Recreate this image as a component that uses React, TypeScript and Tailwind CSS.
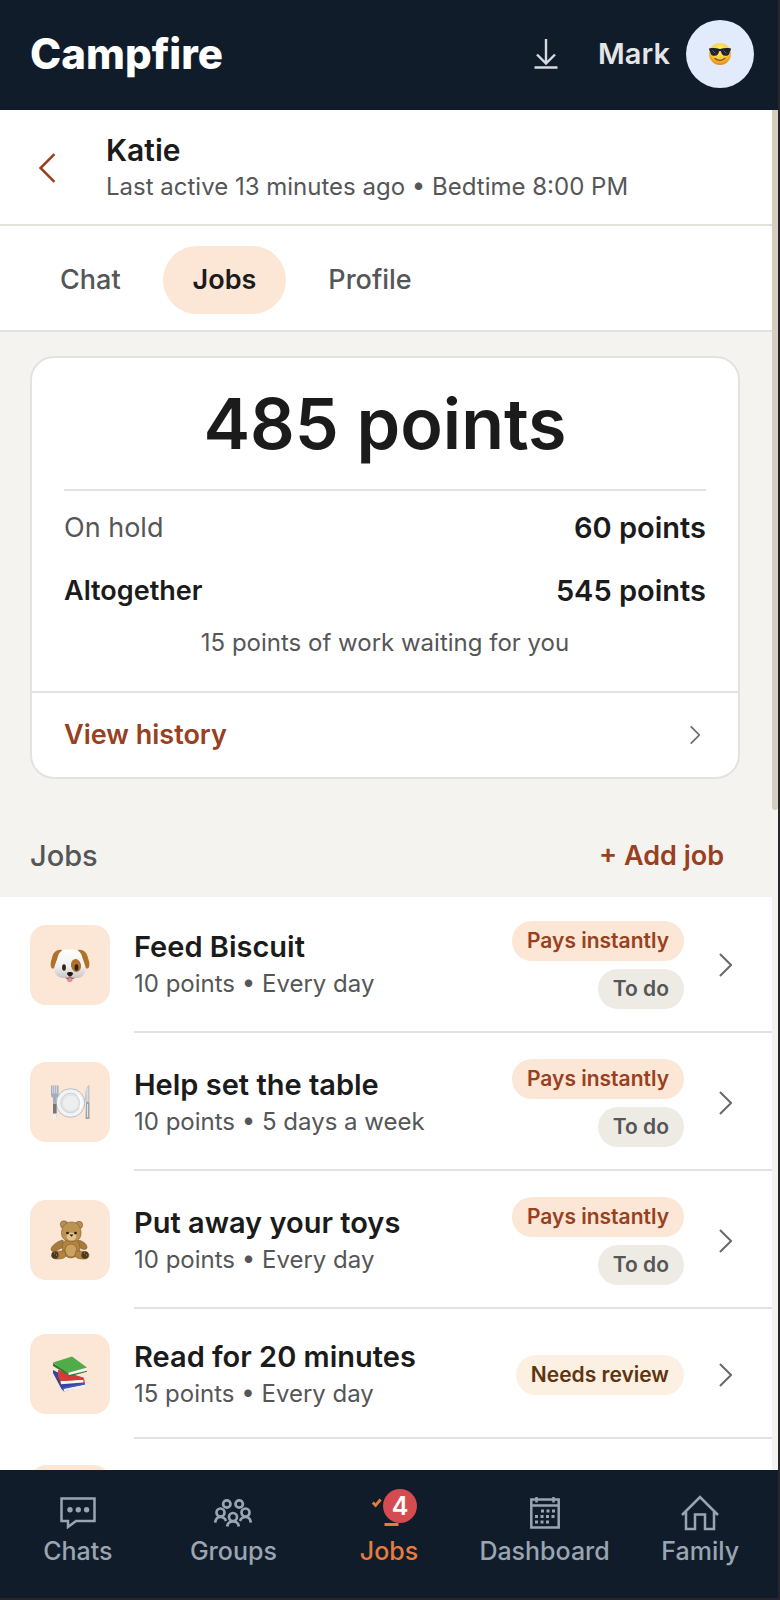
import type { ReactNode } from 'react';

type Status = 'todo' | 'review';

interface Job {
  name: string;
  detail: string;
  instant?: boolean;
  status: Status;
  icon: ReactNode;
}

function SunglassesFace() {
  return (
    <svg viewBox="0 0 24 24" className="w-6 h-6" aria-hidden="true">
      <defs>
        <radialGradient id="face" cx="50%" cy="30%" r="70%">
          <stop offset="0" stopColor="#fff27a" />
          <stop offset="0.6" stopColor="#fbc93a" />
          <stop offset="1" stopColor="#e08a1c" />
        </radialGradient>
      </defs>
      <circle cx="12" cy="12" r="11" fill="url(#face)" />
      <path
        d="M1 6.500c4-.8 7-.6 11 .4 4-1 7-1.200 11-.4l-.4 2c-.6.4-.8 1.200-1 2.200-.5 2.300-2 3.200-4.200 3.100-2.800-.1-4-1.600-4.400-4.300-.3-.7-1.700-.7-2 0-.4 2.700-1.600 4.200-4.400 4.300-2.200.1-3.700-.8-4.200-3.100-.2-1-.4-1.800-1-2.200z"
        fill="#20242a"
      />
      <path d="M4.500 8.500l3 3M15.500 8.500l3 3" stroke="#5a626b" strokeWidth="1" />
      <path d="M7 16.500c3 2.600 7.500 2.400 10-.4" stroke="#8a4b12" strokeWidth="1.300" fill="none" strokeLinecap="round" />
    </svg>
  );
}

function Dog() {
  return (
    <svg viewBox="0 0 40 36" className="w-10 h-9" aria-hidden="true">
      <defs>
        <linearGradient id="fur" x1="0" y1="0" x2="0" y2="1">
          <stop offset="0" stopColor="#ffffff" />
          <stop offset="0.600" stopColor="#f0efee" />
          <stop offset="1" stopColor="#c9c4c1" />
        </linearGradient>
      </defs>
      <path d="M12 3C6 2 3 6 2 11c-1 3-2 6-1 9 1 2 3 2 4 0 2-4 5-8 7-17zM28 3c6-1 9 3 10 8 1 3 2 6 1 9-1 2-3 2-4 0-2-4-5-8-7-17z" fill="#b0712a" />
      <path d="M20 2.500C11 2 9 5 7.500 11 6 16 3.500 20 4.500 24c1 5 6 7.500 9.500 7 3-.5 4-1 6-1s3 .5 6 1c3.500.5 8.500-2 9.500-7 1-4-1.500-8-3-13C31 5 29 2 20 2.500z" fill="url(#fur)" />
      <ellipse cx="26" cy="18.500" rx="5" ry="6.500" fill="#b0712a" transform="rotate(-12 26 18.500)" />
      <ellipse cx="14" cy="20.500" rx="1.900" ry="3.300" fill="#2a2320" />
      <ellipse cx="26.500" cy="20.500" rx="1.900" ry="3.300" fill="#2a2320" />
      <path d="M16.800 30.500h6l-.4 3c-.6 2.300-4.600 2.300-5.200 0z" fill="#e58c93" />
      <path d="M17 26.500c0-2 6-2 6 0 0 1.500-2 3-3 3s-3-1.500-3-3z" fill="#1b1716" />
      <path d="M15.500 31c2 .8 3.500.3 4.500-1.500 1 1.800 2.500 2.300 4.500 1.500" stroke="#5b4d49" strokeWidth="0.900" fill="none" />
    </svg>
  );
}

function Plate() {
  return (
    <svg viewBox="0 0 40 36" className="w-10 h-9" aria-hidden="true">
      <circle cx="20.500" cy="19" r="14.300" fill="#f2f3f4" stroke="#b9bdc2" />
      <circle cx="20.500" cy="19" r="9.800" fill="#e2e4e6" stroke="#cfd3d6" />
      <circle cx="20.500" cy="19" r="7.500" fill="#edeeef" />
      <path d="M28 11a11 11 0 0 1 2 13" stroke="#fff" strokeWidth="2" fill="none" />
      <path d="M1 1.500v9c0 2.300 1 3 2 3.500V34h3.500V14c1.200-.5 2-1.200 2-3.500v-9z" fill="#a4adb8" />
      <path d="M2.800 1.500v8M4.700 1.500v8M6.600 1.500v8" stroke="#e6e9ed" strokeWidth="0.800" />
      <path d="M3 20h3.500v9H3z" fill="#7c7573" />
      <path d="M3 30h3.500v4.500H3z" fill="#eef0f2" />
      <path d="M39.500.500C36 3 35 8 35 16.500l1 1.500h3.500z" fill="#bfc6ce" />
      <path d="M36 18h3.500v17h-4z" fill="#9ca4ad" />
      <path d="M37.200 4v13M37.500 20v13" stroke="#e9ecef" strokeWidth="0.900" />
    </svg>
  );
}

function Teddy() {
  return (
    <svg viewBox="0 0 40 40" className="w-10 h-10" aria-hidden="true">
      <g stroke="#80592a" strokeWidth="0.600">
        <circle cx="14" cy="4.500" r="3.700" fill="#b98f4f" />
        <circle cx="29" cy="5" r="3.700" fill="#b98f4f" />
        <path d="M13 20C8 21 2 25 1 29c0 3 4 3 6 1.500l7-4z" fill="#a87b3d" />
        <path d="M28 20c5 1 9 4 9 7.500 0 2-3 2.500-5 1.500l-5-3z" fill="#a87b3d" />
        <ellipse cx="21" cy="28" rx="9" ry="10" fill="#b2843f" />
        <ellipse cx="21" cy="30.500" rx="6" ry="6.500" fill="#cba261" />
        <path d="M15 31c-4 0-9 0-12 2-3 3 0 6 4 6 5 0 9-1 9-4zM26 31c4 0 9 0 12 2 2.500 3 0 6-4 6-5 0-9-1-9-4z" fill="#b2843f" />
        <path d="M21.500 2c-6 0-9.500 4-10 10-.5 6 3.500 9.500 10 9.500s10-3.500 9.500-9.500c-.5-6-4-10-9.500-10z" fill="#bd9350" />
      </g>
      <ellipse cx="5" cy="35" rx="3.600" ry="3.800" fill="#4d3821" />
      <ellipse cx="35" cy="35" rx="3.600" ry="3.800" fill="#4d3821" />
      <path d="M4 33h1M6 35h1M34 33h1M36 35h1" stroke="#c19a61" />
      <ellipse cx="21.500" cy="16.500" rx="4.800" ry="4" fill="#e2c48f" />
      <circle cx="17.500" cy="13" r="1.300" fill="#211710" />
      <circle cx="25.500" cy="13" r="1.300" fill="#211710" />
      <path d="M19.500 14.500h4l-2 2.200z" fill="#211710" />
    </svg>
  );
}

function Books() {
  return (
    <svg viewBox="0 0 36 36" className="w-9 h-9" aria-hidden="true">
      <path d="M1 14l6 3 25 10 1 3-21 5.500L9.500 33 1 17z" fill="#33449c" />
      <path d="M11.500 32.500L33 28.500v2.500l-21 4.500z" fill="#f1f1f3" />
      <path d="M10.500 31L33 26.500v2L11.500 33z" fill="#4054b5" />
      <path d="M6 14l25 8 1.500 2.500v2.500L9 28l-3-6z" fill="#b7282b" />
      <path d="M8.500 25l23-1.200v2.700L9 28.200z" fill="#f6f3f1" />
      <path d="M6 14l25.500 7.500.5 2L8.500 25 6 20z" fill="#d23d38" />
      <path d="M1 7l16 10 1 3-2-1L1 10z" fill="#2e7a34" />
      <path d="M16 16.500l18.500-4v3L17 19.500z" fill="#f5f6f2" />
      <path d="M1 6.500L20 .500 35 11.500 15.500 17z" fill="#50ab49" />
      <path d="M16 19.200l19-4.400v1L17 20.500z" fill="#2e7a34" />
    </svg>
  );
}

const jobs: Job[] = [
  { name: 'Feed Biscuit', detail: '10 points • Every day', instant: true, status: 'todo', icon: <Dog /> },
  { name: 'Help set the table', detail: '10 points • 5 days a week', instant: true, status: 'todo', icon: <Plate /> },
  { name: 'Put away your toys', detail: '10 points • Every day', instant: true, status: 'todo', icon: <Teddy /> },
  { name: 'Read for 20 minutes', detail: '15 points • Every day', status: 'review', icon: <Books /> },
];

function Chevron({ className }: { className: string }) {
  return (
    <svg viewBox="0 0 14 26" className={className} fill="none" stroke="currentColor" strokeWidth="2.200" aria-hidden="true">
      <path d="M1 1l12 12L1 25" />
    </svg>
  );
}

function Header() {
  return (
    <header className="h-[110px] shrink-0 bg-[#111c2b] border-b-2 border-[#111c2b] flex items-center pl-[30px] pr-6">
      <h1 className="text-[42px] leading-[48px] font-extrabold text-white">Campfire</h1>
      <button className="ml-auto mr-10 cursor-pointer" aria-label="Download">
        <svg viewBox="0 0 24 32" className="w-6 h-8" fill="none" stroke="#d9dadd" strokeWidth="2.400">
          <path d="M12 1v24M3 16.500l9 9 9-9M.5 29.500h23" />
        </svg>
      </button>
      <button className="flex items-center gap-4 cursor-pointer">
        <span className="text-[29px] font-semibold text-[#e3e5e7]">Mark</span>
        <span className="w-[68px] h-[68px] rounded-full bg-[#e1ebfb] flex items-center justify-center">
          <SunglassesFace />
        </span>
      </button>
    </header>
  );
}

function Tabs() {
  const tab = 'h-[68px] px-[30px] flex items-center rounded-full text-[27px]';
  return (
    <nav className="flex items-center gap-3 px-[30px] pt-5 pb-4 bg-white border-b-2 border-[#e2e2e0]">
      <a href="#chat" className={`${tab} font-medium text-[#555658]`}>Chat</a>
      <a href="#jobs" className={`${tab} font-semibold text-[#1b1b1c] bg-[#fce6d6]`}>Jobs</a>
      <a href="#profile" className={`${tab} font-medium text-[#555658]`}>Profile</a>
    </nav>
  );
}

function PointsCard() {
  return (
    <section className="ml-[30px] mr-8 mt-6 bg-white border-2 border-[#e2e2e0] rounded-3xl text-[#1b1b1c]">
      <div className="px-8 pb-[22px]">
        <h2 className="h-[133px] flex items-center justify-center border-b-2 border-[#e2e2e0] text-[70px] font-semibold">
          485 points
        </h2>
        <dl>
          <div className="h-[74px] flex items-center justify-between">
            <dt className="text-[27px] text-[#555658]">On hold</dt>
            <dd className="text-[29px] font-semibold">60 points</dd>
          </div>
          <div className="h-[52px] flex items-center justify-between">
            <dt className="text-[27px] font-semibold">Altogether</dt>
            <dd className="text-[29px] font-semibold">545 points</dd>
          </div>
        </dl>
        <p className="h-[52px] flex items-center justify-center text-[24px] text-[#555658]">
          15 points of work waiting for you
        </p>
      </div>
      <a href="#history" className="h-[86px] px-8 flex items-center justify-between border-t-2 border-[#e2e2e0]">
        <span className="text-[27px] font-semibold text-[#984020]">View history</span>
        <Chevron className="w-[10px] h-5 mr-[6px] text-[#68696b]" />
      </a>
    </section>
  );
}

function Badge({ kind }: { kind: 'instant' | Status }) {
  const base = 'h-10 px-[15px] flex items-center rounded-full text-[21px] font-semibold';
  if (kind === 'instant') return <span className={`${base} bg-[#fce6d6] text-[#984020]`}>Pays instantly</span>;
  if (kind === 'review') return <span className={`${base} bg-[#fbf0e1] text-[#5f3510]`}>Needs review</span>;
  return <span className={`${base} bg-[#edebe3] text-[#555658]`}>To do</span>;
}

function JobRow({ job }: { job: Job }) {
  return (
    <li className="group">
      <a href="#job" className="flex gap-6 pl-[30px]">
        <span className="w-20 h-20 shrink-0 self-center rounded-2xl bg-[#fce6d6] flex items-center justify-center">
          {job.icon}
        </span>
        <div className="flex-1 min-w-0 flex items-center pt-[26px] pb-[22px] pr-10 border-b-2 border-[#e2e2e0] group-first:pt-6">
          <div className="flex-1 h-20 flex flex-col justify-center">
            <h3 className="text-[29px] leading-[38px] font-semibold text-[#1b1b1c]">{job.name}</h3>
            <p className="text-[24px] leading-[36px] text-[#555658]">{job.detail}</p>
          </div>
          <div className="flex flex-col items-end gap-2 mr-[35px]">
            {job.instant && <Badge kind="instant" />}
            <Badge kind={job.status} />
          </div>
          <Chevron className="w-[13px] h-6 text-[#68696b]" />
        </div>
      </a>
    </li>
  );
}

function NavItem({ label, active, children }: { label: string; active?: boolean; children: ReactNode }) {
  return (
    <a
      href={`#${label.toLowerCase()}`}
      className={`flex-1 flex flex-col items-center text-[25px] leading-[36px] font-medium ${active ? 'text-[#e67c3d]' : 'text-[#9ba5b1]'}`}
    >
      <span className="relative h-10 flex items-center">{children}</span>
      {label}
    </a>
  );
}

function BottomNav() {
  return (
    <nav className="h-32 shrink-0 bg-[#111c2b] flex pt-[23px]">
      <NavItem label="Chats">
        <svg viewBox="0 0 36 32" className="w-9 h-8" fill="none" stroke="currentColor" strokeWidth="2.500">
          <path d="M1.500 1.500h33v22.500H16l-8 6v-6H1.500z" />
          <g fill="currentColor" stroke="none">
            <circle cx="10" cy="12.800" r="2.700" />
            <circle cx="18.300" cy="12.800" r="2.700" />
            <circle cx="26.600" cy="12.800" r="2.700" />
          </g>
        </svg>
      </NavItem>
      <NavItem label="Groups">
        <svg viewBox="0 0 38 28" className="w-[38px] h-7" fill="none" stroke="currentColor" strokeWidth="2.700">
          <circle cx="12.800" cy="5" r="3.700" />
          <circle cx="25.200" cy="5" r="3.700" />
          <circle cx="6.500" cy="13.500" r="4" />
          <circle cx="31.500" cy="13.500" r="4" />
          <circle cx="19" cy="18" r="4" />
          <path d="M1.200 23.500c.3-3 2.200-5.500 5.300-5.500s4.600 1.500 5.500 4M36.800 23.500c-.3-3-2.200-5.500-5.300-5.500s-4.600 1.500-5.500 4M13.200 27.500c.3-3 2.500-5 5.800-5s5.500 2 5.800 5" />
        </svg>
      </NavItem>
      <NavItem label="Jobs" active>
        <svg viewBox="0 0 34 34" className="w-[34px] h-[34px]" fill="none" stroke="currentColor" strokeWidth="2.800">
          <path d="M.8 6.500l2.800 3 5-6M12.500 28.500h14" />
        </svg>
        <span className="absolute -top-1 left-[11px] w-[34px] h-[34px] rounded-full bg-[#d64b50] text-white font-semibold flex items-center justify-center">
          4
        </span>
      </NavItem>
      <NavItem label="Dashboard">
        <svg viewBox="0 0 30 32" className="w-[30px] h-8" fill="none" stroke="currentColor" strokeWidth="2.500">
          <path d="M1.300 2.500h27.400v28H1.300zM1 8.500h28M6.500 0v5.500M23.500 0v5.500" />
          <path d="M11 14h15M5 19.500h21M5 25h15" strokeWidth="3" strokeDasharray="3 2.500" />
        </svg>
      </NavItem>
      <NavItem label="Family">
        <svg viewBox="0 0 38 36" className="w-[38px] h-9" fill="none" stroke="currentColor" strokeWidth="2.500">
          <path d="M1 20L19 2l18 18M5 17v17h9V19.500h10V34h9V17" />
        </svg>
      </NavItem>
    </nav>
  );
}

export default function App() {
  return (
    <div className="h-screen flex flex-col overflow-hidden border-r-2 border-b-2 border-[#27242a] font-['Inter','Liberation_Sans',sans-serif]">
      <Header />
      <div className="flex-1 min-h-0 flex bg-[#f4f3ef]">
        <main className="flex-1 min-w-0 overflow-hidden">
          <div className="flex items-center bg-white border-b-2 border-[#e2e2dc] pt-[21px] pb-[19px]">
            <button className="w-[106px] pl-[39px] cursor-pointer text-[#984020]" aria-label="Back">
              <Chevron className="w-[17px] h-[30px] rotate-180" />
            </button>
            <div>
              <h2 className="text-[30px] leading-[38px] font-semibold text-[#1b1b1c]">Katie</h2>
              <p className="text-[24px] leading-[36px] text-[#555658]">Last active 13 minutes ago • Bedtime 8:00 PM</p>
            </div>
          </div>
          <Tabs />
          <PointsCard />
          <div className="h-[118px] pt-9 pl-[30px] pr-12 flex items-center justify-between">
            <h2 className="text-[29px] font-medium text-[#555658]">Jobs</h2>
            <button className="text-[27px] font-semibold text-[#984020] cursor-pointer">+ Add job</button>
          </div>
          <ul className="bg-white">
            {jobs.map((job) => (
              <JobRow key={job.name} job={job} />
            ))}
            <li className="h-40 pl-[30px] pt-[26px]">
              <div className="w-20 h-20 rounded-2xl bg-[#fce6d6]" />
            </li>
          </ul>
        </main>
        <div className="w-[6px]">
          <div className="h-35/68 bg-[#d6cdc0] rounded-b-sm" />
        </div>
      </div>
      <BottomNav />
    </div>
  );
}
